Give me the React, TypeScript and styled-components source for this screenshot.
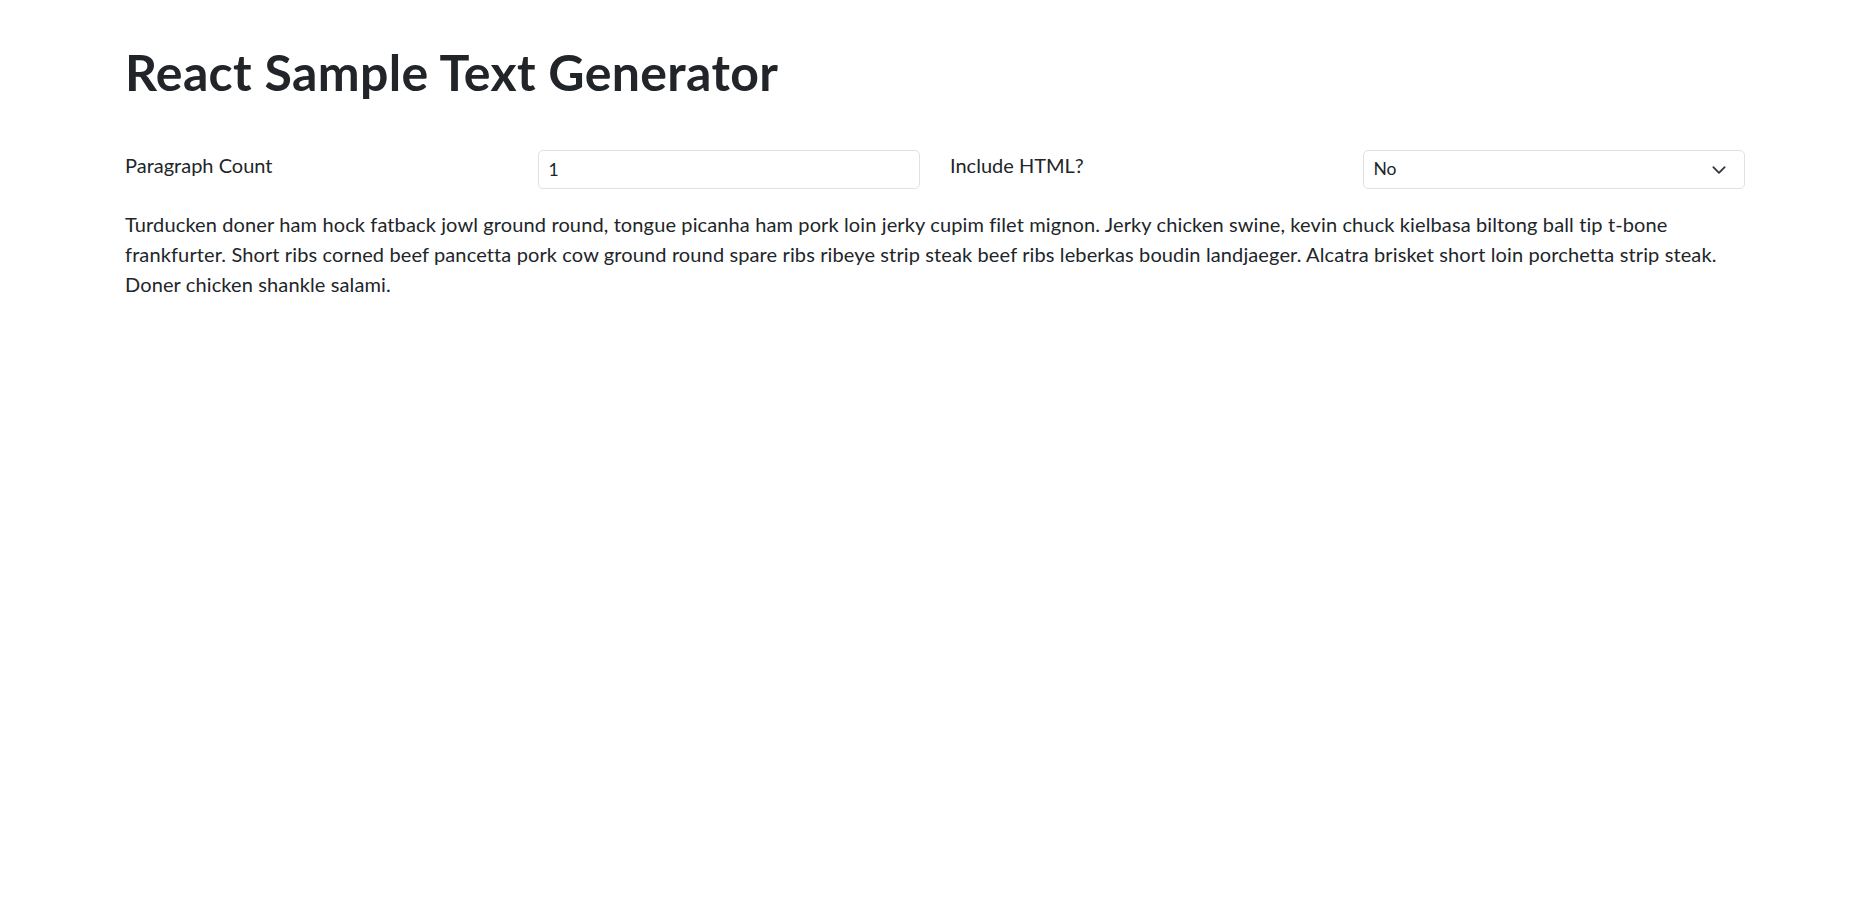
import React, { useState } from "react";
import styled, { createGlobalStyle } from "styled-components";

const GlobalStyle = createGlobalStyle`
  *, *::before, *::after { box-sizing: border-box; }
  html, body { margin: 0; padding: 0; background: #fff; }
  body {
    font-family: Lato, "Noto Sans", sans-serif;
    font-size: 20px;
    line-height: 1.5;
    color: #212529;
  }
`;

const Container = styled.div`
  max-width: 1650px;
  margin: 0 auto;
  padding: 42px 15px 0;
`;

const Title = styled.h1`
  margin: 0 0 48px;
  font-size: 50px;
  font-weight: 700;
  line-height: 1.2;
  letter-spacing: 0.35px;
  color: #212529;
`;

const FormRow = styled.div`
  display: grid;
  grid-template-columns: repeat(4, 1fr);
  column-gap: 30px;
  margin-bottom: 20px;
`;

const Label = styled.label`
  display: block;
  font-size: 20px;
  line-height: 30px;
`;

const Field = styled.input`
  width: 100%;
  height: 39px;
  padding: 5px 10px;
  font-family: inherit;
  font-size: 17.5px;
  line-height: 1.5;
  color: #212529;
  background: #fff;
  border: 1px solid #dee2e6;
  border-radius: 5px;
  outline: none;
`;

const SelectWrap = styled.div`
  position: relative;
  width: 100%;
`;

const Select = styled.select`
  width: 100%;
  height: 39px;
  padding: 5px 40px 5px 10px;
  font-family: inherit;
  font-size: 17.5px;
  line-height: 1.5;
  color: #212529;
  background: #fff;
  border: 1px solid #dee2e6;
  border-radius: 5px;
  appearance: none;
  -webkit-appearance: none;
  outline: none;
`;

const Chevron = styled.svg`
  position: absolute;
  right: 16px;
  top: 50%;
  width: 20px;
  height: 15px;
  transform: translateY(-50%);
  pointer-events: none;
`;

const Paragraph = styled.p`
  margin: 0;
  letter-spacing: 0.12px;
`;

const TEXT =
  "Turducken doner ham hock fatback jowl ground round, tongue picanha ham pork loin jerky cupim filet mignon. Jerky chicken swine, kevin chuck kielbasa biltong ball tip t-bone frankfurter. Short ribs corned beef pancetta pork cow ground round spare ribs ribeye strip steak beef ribs leberkas boudin landjaeger. Alcatra brisket short loin porchetta strip steak. Doner chicken shankle salami.";

export default function App() {
  const [count, setCount] = useState("1");
  const [html, setHtml] = useState("false");
  return (
    <>
      <GlobalStyle />
      <Container>
        <Title>React Sample Text Generator</Title>
        <FormRow>
          <Label htmlFor="count">Paragraph Count</Label>
          <Field
            id="count"
            type="text"
            value={count}
            onChange={(e) => setCount(e.target.value)}
          />
          <Label htmlFor="html">Include HTML?</Label>
          <SelectWrap>
            <Select id="html" value={html} onChange={(e) => setHtml(e.target.value)}>
              <option value="false">No</option>
              <option value="true">Yes</option>
            </Select>
            <Chevron viewBox="0 0 16 16" aria-hidden="true">
              <path
                fill="none"
                stroke="#343a40"
                strokeLinecap="round"
                strokeLinejoin="round"
                strokeWidth="2"
                d="m2 5 6 6 6-6"
              />
            </Chevron>
          </SelectWrap>
        </FormRow>
        <Paragraph>{TEXT}</Paragraph>
      </Container>
    </>
  );
}
